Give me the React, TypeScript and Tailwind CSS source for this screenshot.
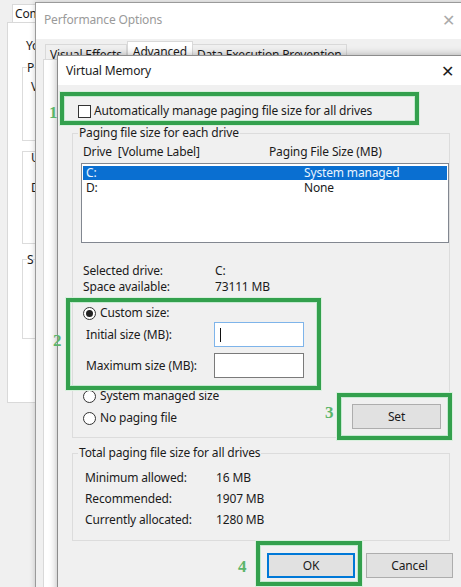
import React from 'react';

const font = "font-['Noto_Sans','Liberation_Sans',sans-serif]";

const Radio: React.FC<{ checked?: boolean }> = ({ checked }) => (
  <span className="w-[13px] h-[13px] rounded-full border border-[#333] bg-white flex items-center justify-center shrink-0">
    {checked && <span className="w-[7px] h-[7px] rounded-full bg-[#222]" />}
  </span>
);

const Button: React.FC<{ label: string; primary?: boolean; w: string }> = ({ label, primary, w }) => (
  <div
    className={`${w} h-[25px] flex items-center justify-center bg-[#e1e1e1] border ${
      primary ? 'border-[#0078d7] shadow-[inset_0_0_0_1px_#0078d7]' : 'border-[#adadad]'
    }`}
  >
    {label}
  </div>
);

const Mark: React.FC<{ className: string }> = ({ className }) => (
  <div
    className={`absolute border-[4px] border-[#33a04d] shadow-[inset_0_0_0_1px_#c4ead0,0_0_0_1px_#d8f0dd] ${className}`}
  />
);

const Num: React.FC<{ n: string; className: string }> = ({ n, className }) => (
  <div className={`absolute font-['Liberation_Serif',serif] font-bold text-[17px] leading-[17px] text-[#5bb56a] ${className}`}>
    {n}
  </div>
);

export default function App() {
  return (
    <div className={`relative w-[461px] h-[587px] overflow-hidden bg-[#f0f0f0] ${font} text-[12px] tracking-[-0.15px] text-[#1b1b1b]`}>
      {/* System Properties behind */}
      <div className="absolute left-0 top-0 w-[70px] h-[587px] bg-[#f0f0f0]">
        <div className="absolute left-[12px] top-[4px] h-[19px] w-[40px] bg-white border border-[#d9d9d9] pl-[2px] leading-[18px]">
          Com
        </div>
        <div className="absolute left-[7px] top-[22px] w-[60px] h-[381px] bg-white border border-[#d9d9d9]">
          <div className="absolute left-[18px] top-[14px]">Yo</div>
          <div className="absolute left-[14px] top-[44px] w-[40px] h-[74px] border border-[#dcdcdc]">
            <span className="absolute left-[4px] -top-[9px] bg-white">P</span>
            <span className="absolute left-[8px] top-[10px]">V</span>
          </div>
          <div className="absolute left-[14px] top-[128px] w-[40px] h-[93px] border border-[#dcdcdc]">
            <span className="absolute left-[8px] top-[-3px]">U</span>
            <span className="absolute left-[8px] top-[27px]">D</span>
          </div>
          <div className="absolute left-[14px] top-[236px] w-[40px] h-[80px] border border-[#dcdcdc]">
            <span className="absolute left-[4px] -top-[9px] bg-white">S</span>
          </div>
        </div>
      </div>

      {/* Performance Options */}
      <div className="absolute left-[35px] top-[2px] w-[440px] h-[600px] bg-[#f0f0f0] border-l border-t border-[#9a9a9a] shadow-[0_0_6px_rgba(0,0,0,0.2)] flex flex-col">
        <div className="h-[36px] bg-white flex items-center justify-between pl-[8px] pb-[2px] text-[#9a9a9a]">
          <span>Performance Options</span>
          <span className="w-[46px] text-center text-[16px] mr-[4px] text-[#aaa]">✕</span>
        </div>
        <div className="h-[20px] flex items-end pl-[9px]">
          <div className="h-[15px] px-[4px] bg-[#f0f0f0] border border-b-0 border-[#d9d9d9] leading-[20px] overflow-hidden">
            Visual Effects
          </div>
          <div className="h-[18px] px-[5px] bg-white border border-b-0 border-[#d9d9d9] leading-[20px]">Advanced</div>
          <div className="h-[15px] px-[4px] bg-[#f0f0f0] border border-b-0 border-l-0 border-[#d9d9d9] leading-[20px] overflow-hidden">
            Data Execution Prevention
          </div>
        </div>
        <div className="ml-[7px] flex-1 bg-white border border-[#d9d9d9]" />
      </div>

      {/* Virtual Memory */}
      <div className="absolute left-[57px] top-[55px] w-[414px] h-[545px] bg-[#f0f0f0] border border-[#8c8c8c] shadow-[0_0_8px_rgba(0,0,0,0.3)] flex flex-col">
        <div className="h-[29px] bg-white flex items-center justify-between pl-[8px]">
          <span>Virtual Memory</span>
          <span className="w-[46px] text-center text-[16px]">✕</span>
        </div>
        <div className="pl-[14px] pr-[20px] flex flex-col">
          <div className="mt-[18px] h-[16px] ml-[6px] flex items-center gap-[3px]">
            <span className="w-[13px] h-[13px] border border-[#333] bg-white shrink-0" />
            <span>Automatically manage paging file size for all drives</span>
          </div>

          <fieldset className="mt-[6px] border border-[#dcdcdc] pl-[10px] pb-[8px] min-w-0">
            <legend className="-ml-[5px] px-[1px] leading-[16px]">Paging file size for each drive</legend>
            <div className="mt-[3px] h-[16px] flex items-center">
              <span className="w-[186px] whitespace-pre">Drive  [Volume Label]</span>
              <span>Paging File Size (MB)</span>
            </div>
            <div className="mt-[3px] -ml-[2px] h-[80px] bg-white border border-[#828790] p-[1px] pt-[2px] leading-[14px]">
              <div className="h-[14px] flex items-center pl-[3px] bg-[#0a6fd1] text-[#e8f4ff]">
                <span className="w-[218px]">C:</span>
                <span>System managed</span>
              </div>
              <div className="h-[15px] flex items-center pl-[3px]">
                <span className="w-[218px]">D:</span>
                <span>None</span>
              </div>
            </div>
            <div className="mt-[20px] h-[16px] flex items-center">
              <span className="w-[132px]">Selected drive:</span>
              <span>C:</span>
            </div>
            <div className="h-[16px] flex items-center">
              <span className="w-[132px]">Space available:</span>
              <span>73111 MB</span>
            </div>
            <div className="mt-[10px] h-[16px] flex items-center gap-[4px]">
              <Radio checked />
              <span>Custom size:</span>
            </div>
            <div className="mt-[1px] h-[25px] flex items-center pl-[3px]">
              <span className="w-[128px]">Initial size (MB):</span>
              <div className="w-[90px] h-[25px] bg-white border border-[#7eb4ea] flex items-center pl-[5px]">
                <span className="w-[1px] h-[14px] bg-[#111]" />
              </div>
            </div>
            <div className="mt-[6px] h-[25px] flex items-center pl-[3px]">
              <span className="w-[128px]">Maximum size (MB):</span>
              <div className="w-[90px] h-[25px] bg-white border border-[#7a7a7a]" />
            </div>
            <div className="mt-[10px] h-[16px] flex items-center gap-[4px]">
              <Radio />
              <span>System managed size</span>
            </div>
            <div className="h-[25px] flex items-center justify-between pr-[8px]">
              <div className="flex items-center gap-[4px] mt-[3px]">
                <Radio />
                <span>No paging file</span>
              </div>
              <Button label="Set" w="w-[89px]" />
            </div>
          </fieldset>

          <fieldset className="mt-[7px] border border-[#dcdcdc] pl-[12px] pb-[10px] min-w-0">
            <legend className="-ml-[7px] px-[1px] leading-[16px]">Total paging file size for all drives</legend>
            <div className="mt-[6px] leading-[21px]">
              <div className="flex">
                <span className="w-[131px]">Minimum allowed:</span>
                <span>16 MB</span>
              </div>
              <div className="flex">
                <span className="w-[131px]">Recommended:</span>
                <span>1907 MB</span>
              </div>
              <div className="flex">
                <span className="w-[131px]">Currently allocated:</span>
                <span>1280 MB</span>
              </div>
            </div>
          </fieldset>

          <div className="mt-[12px] -mr-[3px] flex justify-end gap-[11px]">
            <Button label="OK" primary w="w-[88px]" />
            <Button label="Cancel" w="w-[87px]" />
          </div>
        </div>
      </div>

      {/* annotations */}
      <Mark className="left-[60px] top-[92px] w-[359px] h-[33px]" />
      <Num n="1" className="left-[49px] top-[104px]" />
      <Mark className="left-[66px] top-[298px] w-[255px] h-[92px]" />
      <Num n="2" className="left-[53px] top-[332px]" />
      <Mark className="left-[337px] top-[393px] w-[115px] h-[47px]" />
      <Num n="3" className="left-[325px] top-[404px]" />
      <Mark className="left-[256px] top-[541px] w-[106px] h-[45px]" />
      <Num n="4" className="left-[238px] top-[558px]" />
    </div>
  );
}
